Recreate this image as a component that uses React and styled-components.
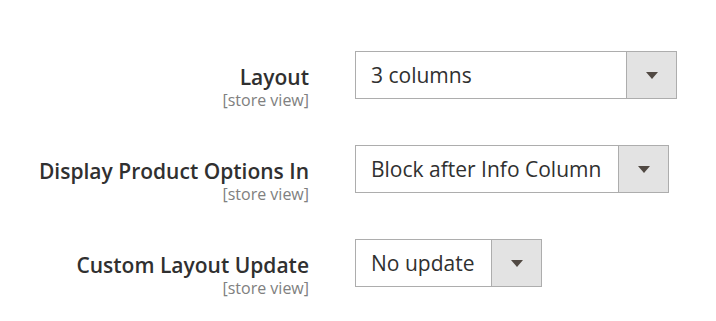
import styled, { createGlobalStyle } from 'styled-components';

const GlobalStyle = createGlobalStyle`
  body {
    margin: 0;
    background: #fff;
    font-family: "Open Sans", "Noto Sans", sans-serif;
  }
`

const fields = [
  { label: 'Layout', value: '3 columns', width: 322 },
  { label: 'Display Product Options In', value: 'Block after Info Column', width: 314 },
  { label: 'Custom Layout Update', value: 'No update', width: 187 },
];

const App = () => {
  return (
    <>
      <GlobalStyle />
      <Form>
        {fields.map((f) => (
          <Field key={f.label}>
            <LabelBox>
              <Label>{f.label}</Label>
              <Scope>[store view]</Scope>
            </LabelBox>
            <Select $width={f.width}>
              <Value>{f.value}</Value>
              <Arrow>
                <svg width="12" height="7" viewBox="0 0 12 7">
                  <path d="M0 0h12L6 7z" fill="#514943" />
                </svg>
              </Arrow>
            </Select>
          </Field>
        ))}
      </Form>
    </>
  );
};

const Form = styled.div`
  padding: 51px 0 34px;
  display: flex;
  flex-direction: column;
  gap: 46px;
`

const Field = styled.div`
  display: grid;
  grid-template-columns: 309px auto;
  grid-template-rows: 48px;
  column-gap: 46px;
  align-items: start;
`

const LabelBox = styled.div`
  padding-top: 12px;
  text-align: right;
`

const Label = styled.div`
  font-size: 21px;
  font-weight: 600;
  line-height: 28px;
  color: #303030;
`

const Scope = styled.div`
  font-size: 16px;
  line-height: 18px;
  color: #808080;
`

const Select = styled.div`
  display: flex;
  box-sizing: border-box;
  width: ${(p) => p.$width}px;
  height: 48px;
  border: 1px solid #adadad;
  background: #fff;
`

const Value = styled.div`
  flex: 1;
  padding-left: 15px;
  font-size: 21px;
  line-height: 46px;
  color: #303030;
  white-space: nowrap;
`

const Arrow = styled.div`
  width: 49px;
  border-left: 1px solid #adadad;
  background: #e3e3e3;
  display: flex;
  align-items: center;
  justify-content: center;
`

export default App;
